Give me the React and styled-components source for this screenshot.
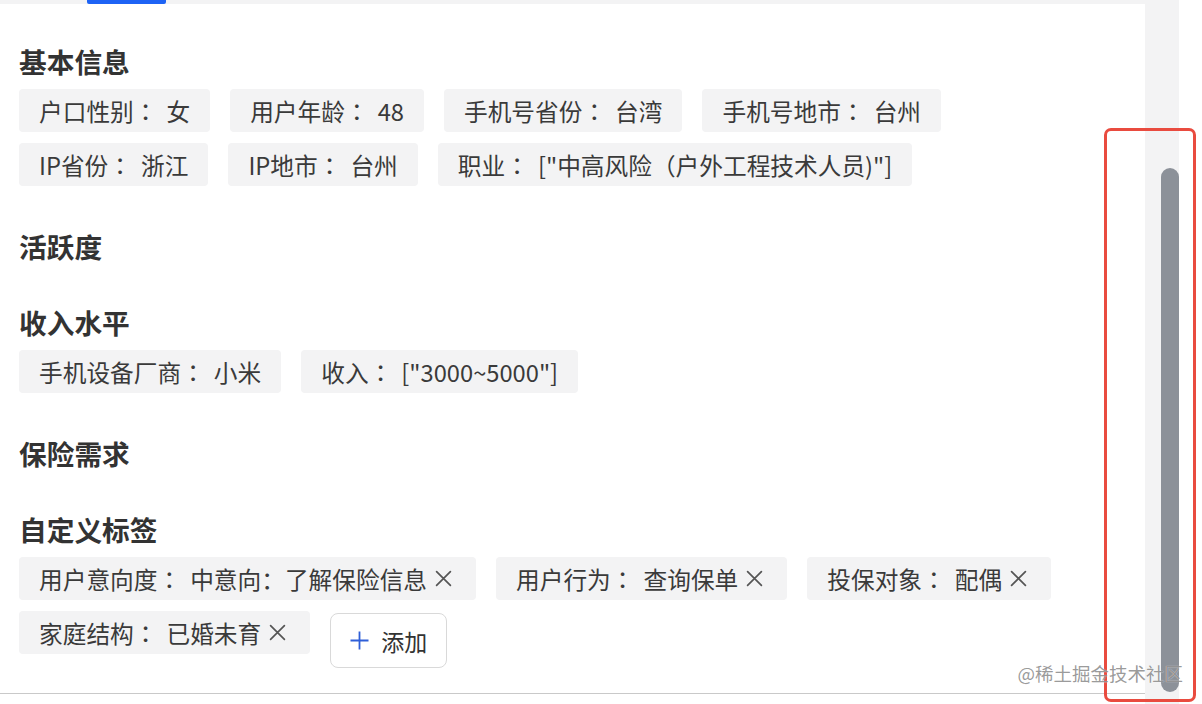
import React from 'react';
import styled, { createGlobalStyle } from 'styled-components';

const GlobalStyle = createGlobalStyle`
  html, body {
    margin: 0;
    padding: 0;
    background: #fff;
    overflow: hidden;
  }
  body {
    font-family: "Noto Sans CJK SC", "Noto Sans", sans-serif;
    color: #333;
  }
`;

const Screen = styled.div`
  position: relative;
  width: 1202px;
  height: 704px;
  display: flex;
  background: #fff;
  overflow: hidden;
`;

const Frame = styled.div`
  width: 1179px;
  height: 704px;
  flex: none;
  display: flex;
  flex-direction: column;
  background: #f3f3f4;
`;

const TabStrip = styled.div`
  height: 4px;
  flex: none;
  display: flex;
`;

const InkBar = styled.div`
  margin-left: 87px;
  width: 79px;
  height: 4px;
  background: #1d63f5;
  border-radius: 0 0 2px 2px;
`;

const Main = styled.div`
  flex: 1;
  display: flex;
  min-height: 0;
`;

const Panel = styled.div`
  width: 1145px;
  flex: none;
  background: #fff;
  display: flex;
  flex-direction: column;
`;

const Body = styled.div`
  flex: 1;
  min-height: 0;
  padding: 37px 40px 0 19px;
`;

const Footer = styled.div`
  height: 10px;
  flex: none;
  border-top: 1px solid #c9c9c9;
`;

const Track = styled.div`
  flex: 1;
  display: flex;
`;

const Thumb = styled.div`
  margin-top: 164px;
  margin-left: 16px;
  width: 18px;
  height: 524px;
  border-radius: 9px;
  background: #8c9199;
`;

const Section = styled.section`
  margin-bottom: ${(p) => (p.$empty ? 36 : 40)}px;
`;

const Title = styled.h3`
  margin: 0;
  font-size: 27.7px;
  line-height: 40px;
  font-weight: 700;
  color: #333;
`;

const TagList = styled.div`
  display: flex;
  flex-wrap: wrap;
  align-items: flex-start;
  column-gap: 20px;
  row-gap: 11px;
  margin-top: 8px;
`;

const Tag = styled.span`
  display: inline-flex;
  align-items: center;
  height: 43px;
  padding: 0 20px;
  background: #f3f3f4;
  border-radius: 4px;
  font-size: 23.7px;
  color: #3a3a3a;
  white-space: nowrap;
`;

const Colon = styled.span`
  font-family: "Noto Sans CJK TC", "Noto Sans CJK SC", sans-serif;
  margin-right: 9px;
`;

const CloseIcon = styled.svg`
  width: 17px;
  height: 17px;
  margin-left: 8px;
  margin-right: 4px;
  flex: none;
`;

const AddButton = styled.button`
  display: inline-flex;
  align-items: center;
  gap: 12px;
  height: 55px;
  margin-top: 2px;
  padding: 0 19px;
  background: #fff;
  border: 1.5px solid #d9d9d9;
  border-radius: 8px;
  font-family: "Noto Sans CJK SC", sans-serif;
  font-size: 23px;
  color: #333;
  cursor: pointer;
`;

const PlusIcon = styled.svg`
  width: 19px;
  height: 19px;
  flex: none;
`;

const Annotation = styled.div`
  position: absolute;
  left: 1104px;
  top: 128px;
  width: 92px;
  height: 574px;
  box-sizing: border-box;
  border: 3px solid #e94b3f;
  border-radius: 7px;
  pointer-events: none;
`;

const Watermark = styled.div`
  position: absolute;
  right: 19px;
  top: 660px;
  font-size: 18.5px;
  line-height: 26px;
  color: rgba(110, 110, 110, 0.7);
  text-shadow: 0 0 1px rgba(255, 255, 255, 0.9);
  pointer-events: none;
`;

const sections = [
  {
    title: '基本信息',
    tags: [
      ['户口性别', '女'],
      ['用户年龄', '48'],
      ['手机号省份', '台湾'],
      ['手机号地市', '台州'],
      ['IP省份', '浙江'],
      ['IP地市', '台州'],
      ['职业', '["中高风险（户外工程技术人员)"]'],
    ],
  },
  { title: '活跃度', tags: [] },
  {
    title: '收入水平',
    tags: [
      ['手机设备厂商', '小米'],
      ['收入', '["3000~5000"]'],
    ],
  },
  { title: '保险需求', tags: [] },
];

const customTags = [
  ['用户意向度', '中意向：了解保险信息'],
  ['用户行为', '查询保单'],
  ['投保对象', '配偶'],
  ['家庭结构', '已婚未育'],
];

function Close() {
  return (
    <CloseIcon viewBox="0 0 16 16" fill="none" stroke="#555" strokeWidth="1.6" strokeLinecap="round">
      <path d="M1.5 1.5 L14.5 14.5 M14.5 1.5 L1.5 14.5" />
    </CloseIcon>
  );
}

function LabelTag({ label, value, closable }) {
  return (
    <Tag>
      {label}
      <Colon>：</Colon>
      {value}
      {closable && <Close />}
    </Tag>
  );
}

export default function App() {
  return (
    <>
      <GlobalStyle />
      <Screen>
        <Frame>
          <TabStrip>
            <InkBar />
          </TabStrip>
          <Main>
            <Panel>
              <Body>
                {sections.map((s) => (
                  <Section key={s.title} $empty={s.tags.length === 0}>
                    <Title>{s.title}</Title>
                    {s.tags.length > 0 && (
                      <TagList>
                        {s.tags.map(([l, v]) => (
                          <LabelTag key={l} label={l} value={v} />
                        ))}
                      </TagList>
                    )}
                  </Section>
                ))}
                <Section>
                  <Title>自定义标签</Title>
                  <TagList>
                    {customTags.map(([l, v]) => (
                      <LabelTag key={l} label={l} value={v} closable />
                    ))}
                    <AddButton>
                      <PlusIcon viewBox="0 0 19 19" fill="none" stroke="#2f5fd8" strokeWidth="1.8">
                        <path d="M9.5 0.5 V18.5 M0.5 9.5 H18.5" />
                      </PlusIcon>
                      添加
                    </AddButton>
                  </TagList>
                </Section>
              </Body>
              <Footer />
            </Panel>
            <Track>
              <Thumb />
            </Track>
          </Main>
        </Frame>
        <Annotation />
        <Watermark>@稀土掘金技术社区</Watermark>
      </Screen>
    </>
  );
}
